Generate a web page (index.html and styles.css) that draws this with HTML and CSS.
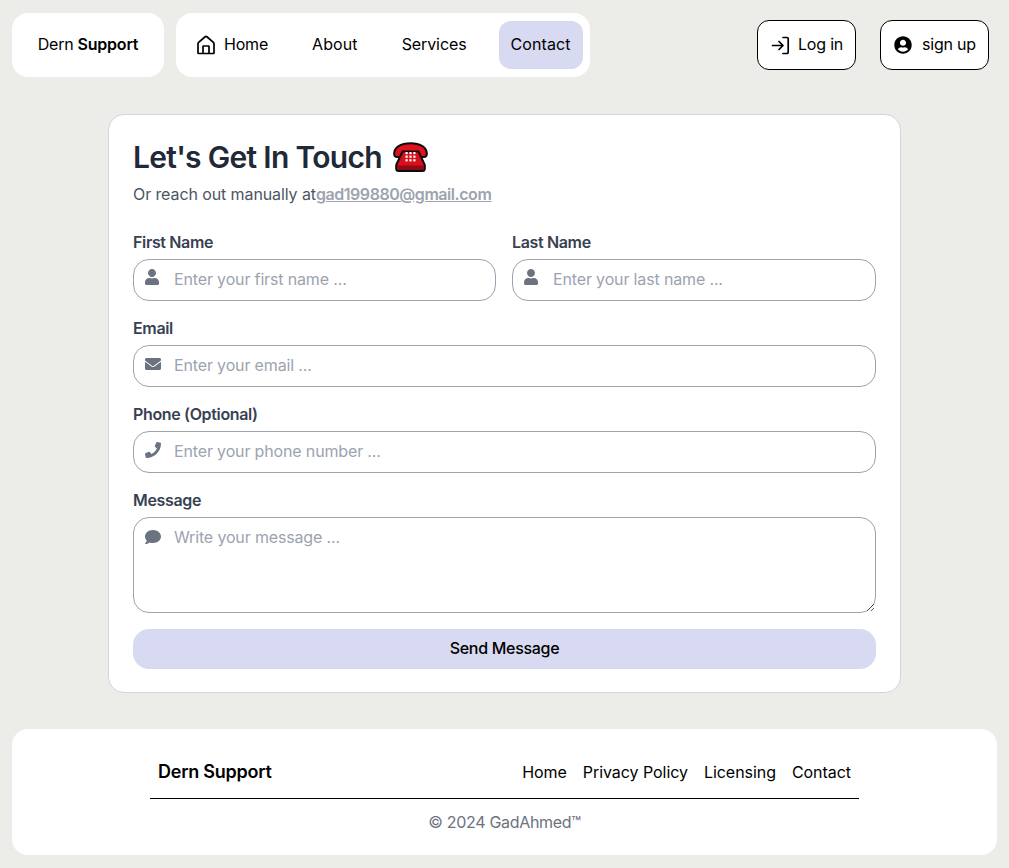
FILE: index.html
```html
<!DOCTYPE html>
<html lang="en">
<head>
<meta charset="utf-8">
<title>Contact - Dern Support</title>
<link rel="stylesheet" href="styles.css">
</head>
<body>
<header class="topbar">
  <div class="topbar-left">
    <a class="brand" href="#">Dern <b>Support</b></a>
    <nav class="nav">
      <a class="nav-item nav-home" href="#">
        <svg class="nav-icon" viewBox="0 0 20 20" fill="none" stroke="currentColor" stroke-width="1.7" stroke-linejoin="round"><path d="M2 18V8.800c0-.6.2-1 .6-1.400L8.800 2a1.800 1.800 0 0 1 2.400 0l6.200 5.400c.4.4.6.8.6 1.400V18c0 .3-.2.5-.5.5h-15c-.3 0-.5-.2-.5-.5Z"/><path d="M7 18.500v-7c0-.3.2-.5.5-.5h5c.3 0 .5.2.5.5v7"/></svg>
        Home</a>
      <a class="nav-item nav-wide" href="#">About</a>
      <a class="nav-item" href="#">Services</a>
      <a class="nav-item nav-wide nav-active" href="#">Contact</a>
    </nav>
  </div>
  <div class="auth">
    <a class="auth-btn btn-login" href="#">
      <svg class="auth-icon" viewBox="0 0 19 19" fill="none" stroke="currentColor" stroke-width="1.7" stroke-linecap="round" stroke-linejoin="round"><path d="M1.5 9.5h10M8 5.5l4 4-4 4"/><path d="M12 1.5h4a1.2 1.2 0 0 1 1.2 1.2v13.6a1.2 1.2 0 0 1-1.2 1.2h-4"/></svg>
      Log in</a>
    <a class="auth-btn btn-signup" href="#">
      <svg class="auth-icon circle-icon" viewBox="0 0 496 512" fill="currentColor"><path d="M248 8C111 8 0 119 0 256s111 248 248 248 248-111 248-248S385 8 248 8zm0 96c48.6 0 88 39.4 88 88s-39.4 88-88 88-88-39.4-88-88 39.4-88 88-88zm0 344c-58.7 0-111.3-26.6-146.5-68.2 18.8-35.4 55.6-59.8 98.5-59.8 2.4 0 4.8.4 7.1 1.1 13 4.2 26.6 6.9 40.9 6.9 14.3 0 28-2.7 40.9-6.9 2.3-.7 4.7-1.1 7.1-1.1 42.9 0 79.7 24.4 98.5 59.8C359.3 421.4 306.7 448 248 448z"/></svg>
      sign up</a>
  </div>
</header>

<main class="card">
  <h1 class="title">Let's Get In Touch
    <svg class="phone-emoji" viewBox="0 0 35 30"><path d="M1.2 12.5C.6 5 8 1.2 17.5 1.2S34.400 5 33.800 12.500c-.2 1.700-1.200 2.500-2.800 2.500h-3.500c-1.600 0-2.500-1-2.500-2.500V10H10v2.500c0 1.500-.9 2.500-2.500 2.500H4c-1.600 0-2.600-.8-2.800-2.500Z" fill="#e3101f" stroke="#0c0c0c" stroke-width="2" stroke-linejoin="round"/><path d="M9.500 9.500h16l6.300 13.500v3.500c0 1.500-1 2.500-2.500 2.500H5.700c-1.500 0-2.500-1-2.500-2.500V23Z" fill="#d80f1c" stroke="#0c0c0c" stroke-width="2" stroke-linejoin="round"/><path d="M4.200 23.500h26.600v3c0 .9-.6 1.500-1.500 1.500H5.700c-.9 0-1.500-.6-1.500-1.500Z" fill="#8e0a14"/><g fill="#fff"><rect x="12.500" y="10" width="2.200" height="2.200"/><rect x="16.400" y="10" width="2.200" height="2.200"/><rect x="20.300" y="10" width="2.200" height="2.200"/><rect x="12.500" y="13.600" width="2.200" height="2.200"/><rect x="16.400" y="13.600" width="2.200" height="2.200"/><rect x="20.300" y="13.600" width="2.200" height="2.200"/><rect x="12.500" y="17.200" width="2.200" height="2.200"/><rect x="16.400" y="17.200" width="2.200" height="2.200"/><rect x="20.300" y="17.200" width="2.200" height="2.200"/></g></svg>
  </h1>
  <p class="subtitle">Or reach out manually at<a class="mail" href="#">gad199880@gmail.com</a></p>

  <form class="form">
    <div class="row">
      <div class="field">
        <label class="label" for="first">First Name</label>
        <div class="control">
          <svg class="field-icon icon-user" viewBox="0 0 448 512"><path d="M224 256c70.7 0 128-57.3 128-128S294.7 0 224 0 96 57.3 96 128s57.3 128 128 128zm89.6 32h-16.7c-22.2 10.2-46.9 16-72.9 16s-50.6-5.8-72.9-16h-16.7C60.2 288 0 348.2 0 422.4V464c0 26.5 21.5 48 48 48h352c26.5 0 48-21.5 48-48v-41.6c0-74.2-60.2-134.4-134.4-134.4z"/></svg>
          <input class="input" id="first" placeholder="Enter your first name ...">
        </div>
      </div>
      <div class="field">
        <label class="label" for="last">Last Name</label>
        <div class="control">
          <svg class="field-icon icon-user" viewBox="0 0 448 512"><path d="M224 256c70.7 0 128-57.3 128-128S294.7 0 224 0 96 57.3 96 128s57.3 128 128 128zm89.6 32h-16.7c-22.2 10.2-46.9 16-72.9 16s-50.6-5.8-72.9-16h-16.7C60.2 288 0 348.2 0 422.4V464c0 26.5 21.5 48 48 48h352c26.5 0 48-21.5 48-48v-41.6c0-74.2-60.2-134.4-134.4-134.4z"/></svg>
          <input class="input" id="last" placeholder="Enter your last name ...">
        </div>
      </div>
    </div>
    <div class="field">
      <label class="label" for="email">Email</label>
      <div class="control">
        <svg class="field-icon" viewBox="0 0 512 512"><path d="M502.3 190.8c3.9-3.1 9.7-.2 9.7 4.7V400c0 26.5-21.5 48-48 48H48c-26.5 0-48-21.5-48-48V195.6c0-5 5.7-7.8 9.7-4.7 22.4 17.4 52.1 39.5 154.1 113.6 21.1 15.4 56.7 47.8 92.2 47.6 35.7.3 72-32.8 92.3-47.6 102-74.1 131.6-96.3 154-113.7zM256 320c23.2.4 56.6-29.2 73.4-41.4 132.7-96.3 142.8-104.7 173.4-128.7 5.8-4.5 9.2-11.5 9.2-18.9v-19c0-26.5-21.5-48-48-48H48C21.5 64 0 85.5 0 112v19c0 7.4 3.4 14.3 9.2 18.9 30.6 23.9 40.7 32.4 173.4 128.7 16.8 12.2 50.2 41.8 73.4 41.4z"/></svg>
        <input class="input" id="email" placeholder="Enter your email ...">
      </div>
    </div>
    <div class="field">
      <label class="label" for="phone">Phone (Optional)</label>
      <div class="control">
        <svg class="field-icon" viewBox="0 0 512 512"><path d="M493.4 24.6l-104-24c-11.3-2.6-22.9 3.3-27.5 13.9l-48 112c-4.2 9.8-1.4 21.3 6.9 28l60.6 49.6c-36 76.7-98.9 140.5-177.2 177.2l-49.6-60.6c-6.8-8.3-18.2-11.1-28-6.9l-112 48C3.9 366.5-2 378.1.6 389.4l24 104C27.1 504.2 36.7 512 48 512c256.1 0 464-207.5 464-464 0-11.2-7.7-20.9-18.6-23.4z"/></svg>
        <input class="input" id="phone" placeholder="Enter your phone number ...">
      </div>
    </div>
    <div class="field">
      <label class="label" for="message">Message</label>
      <div class="control">
        <svg class="field-icon icon-top" viewBox="0 0 512 512"><path d="M256 32C114.6 32 0 125.1 0 240c0 49.6 21.4 95 57 130.7C44.5 421.1 2.7 466 2.2 466.5c-2.2 2.3-2.8 5.7-1.5 8.7S4.8 480 8 480c66.3 0 116-31.8 140.6-51.4 32.7 12.3 69 19.4 107.4 19.4 141.4 0 256-93.1 256-208S397.4 32 256 32z"/></svg>
        <textarea class="input textarea" id="message" placeholder="Write your message ..."></textarea>
      </div>
    </div>
    <button class="send" type="button">Send Message</button>
  </form>
</main>

<footer class="footer">
  <div class="footer-inner">
    <div class="footer-top">
      <span class="footer-brand">Dern Support</span>
      <div class="footer-links">
        <a href="#">Home</a>
        <a href="#">Privacy Policy</a>
        <a href="#">Licensing</a>
        <a href="#">Contact</a>
      </div>
    </div>
    <p class="copyright">© 2024 GadAhmed™</p>
  </div>
</footer>
</body>
</html>
```
FILE: styles.css
```css
* { box-sizing: border-box; }
html, body { margin: 0; }
body {
  background: #ecece8;
  color: #000;
  font-family: Inter, "Noto Sans", sans-serif;
  font-size: 16px;
  line-height: 24px;
  padding: 13px 12px 13px;
  letter-spacing: -0.1px;
}
a { color: inherit; text-decoration: none; }

.topbar { display: flex; justify-content: space-between; height: 64px; }
.topbar-left { display: flex; gap: 12px; }
.brand {
  width: 152px;
  background: #fff;
  border-radius: 16px;
  display: flex;
  align-items: center;
  justify-content: center;
  gap: 4px;
  padding-bottom: 2px;
  letter-spacing: -0.2px;
}
.brand b { font-weight: 600; }
.nav {
  width: 414px;
  background: #fff;
  border-radius: 16px;
  padding: 8px;
  display: flex;
  gap: 20px;
}
.nav-item {
  display: flex;
  align-items: center;
  gap: 8px;
  padding: 0 12px 2px;
  border-radius: 12px;
}
.nav-home { letter-spacing: -0.2px; }
.nav-wide { letter-spacing: 0.1px; }
.nav-active { background: #d7daf0; }
.nav-icon { width: 20px; height: 20px; margin-top: 1px; }

.auth { display: flex; gap: 24px; padding: 7px 8px 7px 0; }
.auth-btn {
  height: 50px;
  display: flex;
  align-items: center;
  gap: 8px;
  background: #fff;
  border: 1px solid #000;
  border-radius: 12px;
  padding: 0 12px 2px 13px;
  white-space: nowrap;
  letter-spacing: -0.2px;
}
.btn-login { width: 99px; }
.btn-signup { width: 109px; gap: 10px; }
.auth-icon { width: 19px; height: 19px; flex: none; margin-top: 2px; }
.circle-icon { width: 18px; height: 18px; }

.card {
  width: 793px;
  margin: 37px auto 36px;
  background: #fff;
  border: 1px solid #d1d5db;
  border-radius: 16px;
  padding: 24px 24px 23px;
}
.title {
  margin: 0;
  font-size: 30px;
  line-height: 36px;
  font-weight: 600;
  color: #1f2937;
  letter-spacing: -0.7px;
  display: flex;
  align-items: center;
  gap: 11px;
}
.phone-emoji { width: 35px; height: 30px; }
.subtitle { margin: 7px 0 25px; color: #4b5563; }
.mail { color: #9ca3af; font-weight: 600; letter-spacing: -0.45px; text-decoration: underline; }

.form { display: flex; flex-direction: column; gap: 16px; }
.row { display: grid; grid-template-columns: 363px 364px; gap: 16px; }
.label {
  display: block;
  margin-bottom: 6px;
  color: #374151;
  font-weight: 600;
  line-height: 22px;
  letter-spacing: -0.35px;
}
.control { position: relative; display: flex; }
.field-icon {
  position: absolute;
  left: 12px;
  top: 11px;
  width: 16px;
  height: 16px;
  fill: #6b7280;
}
.icon-user { top: 10px; width: 14px; }
.icon-top { top: 12px; }
.input {
  display: block;
  width: 100%;
  height: 42px;
  padding: 0 12px 2px 40px;
  border: 1px solid #9ca3af;
  border-radius: 16px;
  background: #fff;
  font: inherit;
  letter-spacing: -0.15px;
  color: #111827;
  outline: none;
}
.input::placeholder { color: #9ca3af; opacity: 1; }
.textarea { height: 96px; padding-top: 7px; resize: vertical; }
.send {
  height: 40px;
  padding: 0 0 2px;
  border: 0;
  border-radius: 16px;
  background: #d7daf0;
  color: #000;
  font: inherit;
  font-weight: 500;
  letter-spacing: -0.3px;
}

.footer { background: #fff; border-radius: 16px; padding: 29px 0 21px; }
.footer-inner { width: 709px; margin: 0 auto; }
.footer-top {
  display: flex;
  justify-content: space-between;
  align-items: center;
  padding: 0 8px 12px;
  border-bottom: 1px solid #000;
}
.footer-brand { font-size: 18px; line-height: 28px; font-weight: 600; letter-spacing: -0.25px; }
.footer-links { display: flex; gap: 16px; letter-spacing: -0.05px; }
.copyright { margin: 11px 0 0; text-align: center; color: #6b7280; letter-spacing: -0.3px; }
```
